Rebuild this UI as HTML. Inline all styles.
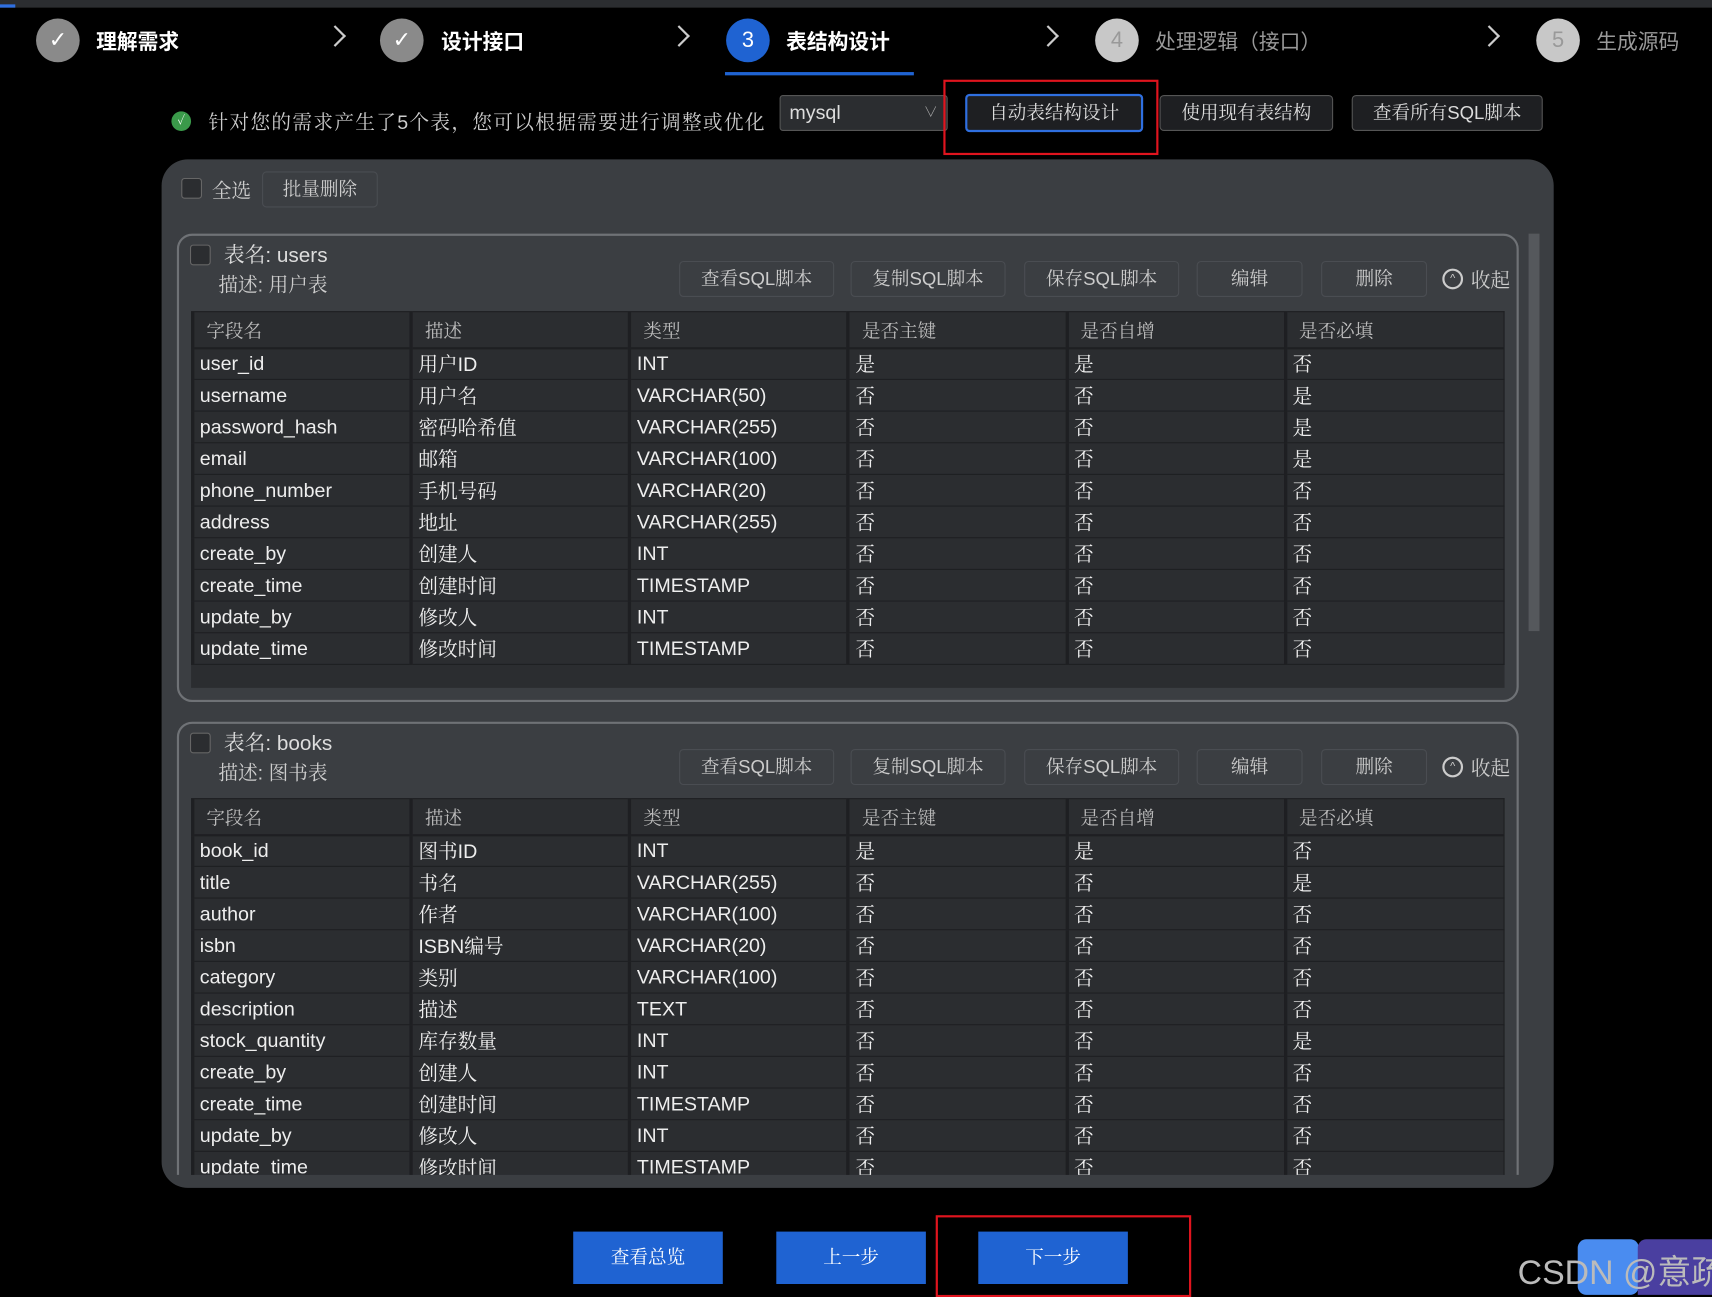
<!DOCTYPE html>
<html><head><meta charset="utf-8">
<style>
*{box-sizing:border-box;margin:0;padding:0}
html,body{width:1712px;height:1295px;overflow:hidden;background:#000}
#s{position:absolute;left:0;top:0;width:1568px;height:1186px;transform:scale(1.09184);transform-origin:0 0;background:#000;font-family:"Liberation Sans","Noto Serif CJK SC",serif;color:#ddd}
.a{position:absolute}
.topbar{left:0;top:0;width:1568px;height:7px;background:#2b2d30}
.circ{width:40px;height:40px;border-radius:50%;text-align:center;line-height:40px;font-size:20px;color:#fff;font-family:"Liberation Sans",sans-serif}
.sl{font-family:"Liberation Sans","Noto Sans CJK SC",sans-serif;font-weight:bold;font-size:19px;color:#fff;top:24px}
.chev{top:26px;width:14px;height:14px;border-right:2px solid #ccc;border-top:2px solid #ccc;transform:rotate(45deg)}
.btn{border:1px solid #555;border-radius:4px;background:#1e1f22;color:#ddd;font-size:17px;text-align:center}
.cbtn{border:1px solid #4a4d52;border-radius:4px;background:#3b3e42;color:#ccc;font-size:17px;text-align:center;height:33px;line-height:31px}
.cb{width:19px;height:19px;border:1px solid #666;border-radius:3px;background:#2b2d30}
.card{left:14px;width:1229px;border:2px solid #6f7276;border-radius:14px}
table{border-collapse:collapse;position:absolute;left:11px;width:1203px;table-layout:fixed;background:#2b2d30}
td,th{height:29px;border:1px solid #1e1f22;border-left:3px solid #1e1f22;font-size:18px;color:#eee;font-weight:normal;text-align:left;padding-left:5px;white-space:nowrap;overflow:hidden}
th{height:33px;color:#bbb;font-size:17px;padding-left:11px;border-bottom:2px solid #1e1f22}
.bb{background:#1f63d2;color:#fff;font-size:17px;text-align:center;line-height:48px;width:137px;height:48px;top:1128px}
.red{border:2px solid #e0141e}
</style></head><body><div id="s">
<div class="a topbar"></div><div class="a" style="left:0;top:4px;width:14px;height:3px;background:#2f6fe0"></div>

<div class="a circ" style="left:33px;top:17px;background:#8a8a8a">✓</div>
<div class="a sl" style="left:88px">理解需求</div>
<div class="a chev" style="left:300px"></div>
<div class="a circ" style="left:348px;top:17px;background:#8a8a8a">✓</div>
<div class="a sl" style="left:404px">设计接口</div>
<div class="a chev" style="left:615px"></div>
<div class="a circ" style="left:665px;top:17px;background:#1f63d2">3</div>
<div class="a sl" style="left:720px">表结构设计</div>
<div class="a" style="left:664px;top:66px;width:173px;height:3px;background:#1f63d2"></div>
<div class="a chev" style="left:953px"></div>
<div class="a circ" style="left:1003px;top:17px;background:#c8c8c8;color:#999">4</div>
<div class="a sl" style="left:1058px;color:#999;font-weight:normal">处理逻辑（接口）</div>
<div class="a chev" style="left:1357px"></div>
<div class="a circ" style="left:1407px;top:17px;background:#c8c8c8;color:#999">5</div>
<div class="a sl" style="left:1462px;color:#999;font-weight:normal">生成源码</div>

<div class="a" style="left:157px;top:102px;width:18px;height:18px;border-radius:50%;background:#3a9a4a;color:#fff;font-size:11px;text-align:center;line-height:18px">✓</div>
<div class="a" style="left:191px;top:98px;font-size:18px;color:#ccc;letter-spacing:1.2px">针对您的需求产生了5个表，您可以根据需要进行调整或优化</div>
<div class="a" style="left:714px;top:87px;width:154px;height:33px;background:#2b2d30;border:1px solid #555;border-radius:3px;font-size:18px;color:#ddd;padding-left:8px;line-height:30px">mysql<span style="position:absolute;right:8px;top:0;font-size:13px;color:#aaa">∨</span></div>
<div class="a red" style="left:864px;top:73px;width:197px;height:69px"></div>
<div class="a btn" style="left:884px;top:86px;width:163px;height:35px;line-height:31px;border:2px solid #2f6fe0">自动表结构设计</div>
<div class="a btn" style="left:1062px;top:87px;width:159px;height:33px;line-height:31px">使用现有表结构</div>
<div class="a btn" style="left:1238px;top:87px;width:175px;height:33px;line-height:31px">查看所有SQL脚本</div>

<div class="a" style="left:148px;top:146px;width:1275px;height:942px;background:#3b3e42;border-radius:24px;overflow:hidden">
 <div class="a cb" style="left:18px;top:17px"></div>
 <div class="a" style="left:46px;top:15px;font-size:18px;color:#ccc">全选</div>
 <div class="a cbtn" style="left:92px;top:11px;width:106px;height:33px">批量删除</div>
 <div class="a" style="left:1252px;top:68px;width:10px;height:364px;background:#55585c"></div>
 <div class="a" style="left:0;top:54px;width:1250px;height:876px;overflow:hidden">
  <div class="a card" style="top:14px;height:429px">
   <div class="a cb" style="left:10px;top:8px"></div>
   <div class="a" style="left:41px;top:3px;font-size:19px;color:#ddd">表名: users</div>
   <div class="a" style="left:36px;top:31px;font-size:18px;color:#ccc">描述: 用户表</div>
   <div class="a cbtn" style="left:458px;top:23px;width:142px">查看SQL脚本</div>
   <div class="a cbtn" style="left:615px;top:23px;width:142px">复制SQL脚本</div>
   <div class="a cbtn" style="left:774px;top:23px;width:142px">保存SQL脚本</div>
   <div class="a cbtn" style="left:932px;top:23px;width:97px">编辑</div>
   <div class="a cbtn" style="left:1046px;top:23px;width:97px">删除</div>
   <div class="a" style="left:1157px;top:30px;width:19px;height:19px;border:2px solid #ccc;border-radius:50%;font-size:10px;text-align:center;line-height:15px;color:#ccc">^</div>
   <div class="a" style="left:1183px;top:27px;font-size:18px;color:#ccc">收起</div>
   <div class="a" style="left:11px;top:69px;width:1203px;height:345px;background:#2b2d30"></div>
   <table style="top:69px">
    <tr><th>字段名</th><th>描述</th><th>类型</th><th>是否主键</th><th>是否自增</th><th>是否必填</th></tr>
    <tr><td>user_id</td><td>用户ID</td><td>INT</td><td>是</td><td>是</td><td>否</td></tr>
    <tr><td>username</td><td>用户名</td><td>VARCHAR(50)</td><td>否</td><td>否</td><td>是</td></tr>
    <tr><td>password_hash</td><td>密码哈希值</td><td>VARCHAR(255)</td><td>否</td><td>否</td><td>是</td></tr>
    <tr><td>email</td><td>邮箱</td><td>VARCHAR(100)</td><td>否</td><td>否</td><td>是</td></tr>
    <tr><td>phone_number</td><td>手机号码</td><td>VARCHAR(20)</td><td>否</td><td>否</td><td>否</td></tr>
    <tr><td>address</td><td>地址</td><td>VARCHAR(255)</td><td>否</td><td>否</td><td>否</td></tr>
    <tr><td>create_by</td><td>创建人</td><td>INT</td><td>否</td><td>否</td><td>否</td></tr>
    <tr><td>create_time</td><td>创建时间</td><td>TIMESTAMP</td><td>否</td><td>否</td><td>否</td></tr>
    <tr><td>update_by</td><td>修改人</td><td>INT</td><td>否</td><td>否</td><td>否</td></tr>
    <tr><td>update_time</td><td>修改时间</td><td>TIMESTAMP</td><td>否</td><td>否</td><td>否</td></tr>
   </table>
  </div>
  <div class="a card" style="top:461px;height:500px">
   <div class="a cb" style="left:10px;top:8px"></div>
   <div class="a" style="left:41px;top:3px;font-size:19px;color:#ddd">表名: books</div>
   <div class="a" style="left:36px;top:31px;font-size:18px;color:#ccc">描述: 图书表</div>
   <div class="a cbtn" style="left:458px;top:23px;width:142px">查看SQL脚本</div>
   <div class="a cbtn" style="left:615px;top:23px;width:142px">复制SQL脚本</div>
   <div class="a cbtn" style="left:774px;top:23px;width:142px">保存SQL脚本</div>
   <div class="a cbtn" style="left:932px;top:23px;width:97px">编辑</div>
   <div class="a cbtn" style="left:1046px;top:23px;width:97px">删除</div>
   <div class="a" style="left:1157px;top:30px;width:19px;height:19px;border:2px solid #ccc;border-radius:50%;font-size:10px;text-align:center;line-height:15px;color:#ccc">^</div>
   <div class="a" style="left:1183px;top:27px;font-size:18px;color:#ccc">收起</div>
   <table style="top:68px">
    <tr><th>字段名</th><th>描述</th><th>类型</th><th>是否主键</th><th>是否自增</th><th>是否必填</th></tr>
    <tr><td>book_id</td><td>图书ID</td><td>INT</td><td>是</td><td>是</td><td>否</td></tr>
    <tr><td>title</td><td>书名</td><td>VARCHAR(255)</td><td>否</td><td>否</td><td>是</td></tr>
    <tr><td>author</td><td>作者</td><td>VARCHAR(100)</td><td>否</td><td>否</td><td>否</td></tr>
    <tr><td>isbn</td><td>ISBN编号</td><td>VARCHAR(20)</td><td>否</td><td>否</td><td>否</td></tr>
    <tr><td>category</td><td>类别</td><td>VARCHAR(100)</td><td>否</td><td>否</td><td>否</td></tr>
    <tr><td>description</td><td>描述</td><td>TEXT</td><td>否</td><td>否</td><td>否</td></tr>
    <tr><td>stock_quantity</td><td>库存数量</td><td>INT</td><td>否</td><td>否</td><td>是</td></tr>
    <tr><td>create_by</td><td>创建人</td><td>INT</td><td>否</td><td>否</td><td>否</td></tr>
    <tr><td>create_time</td><td>创建时间</td><td>TIMESTAMP</td><td>否</td><td>否</td><td>否</td></tr>
    <tr><td>update_by</td><td>修改人</td><td>INT</td><td>否</td><td>否</td><td>否</td></tr>
    <tr><td>update_time</td><td>修改时间</td><td>TIMESTAMP</td><td>否</td><td>否</td><td>否</td></tr>
   </table>
  </div>
 </div>
</div>

<div class="a bb" style="left:525px">查看总览</div>
<div class="a bb" style="left:711px">上一步</div>
<div class="a bb" style="left:896px">下一步</div>
<div class="a red" style="left:857px;top:1113px;width:234px;height:75px"></div>

<div class="a" style="left:1445px;top:1135px;width:56px;height:51px;background:#4a8cf0;border-radius:8px"></div>
<div class="a" style="left:1500px;top:1135px;width:68px;height:51px;background:#4a3fa0;border-radius:8px 0 0 0"></div>
<div class="a" style="left:1390px;top:1140px;font-size:31px;color:#bbb;font-family:'Liberation Sans','Noto Sans CJK SC',sans-serif;white-space:nowrap">CSDN @意疏</div>
</div></body></html>
